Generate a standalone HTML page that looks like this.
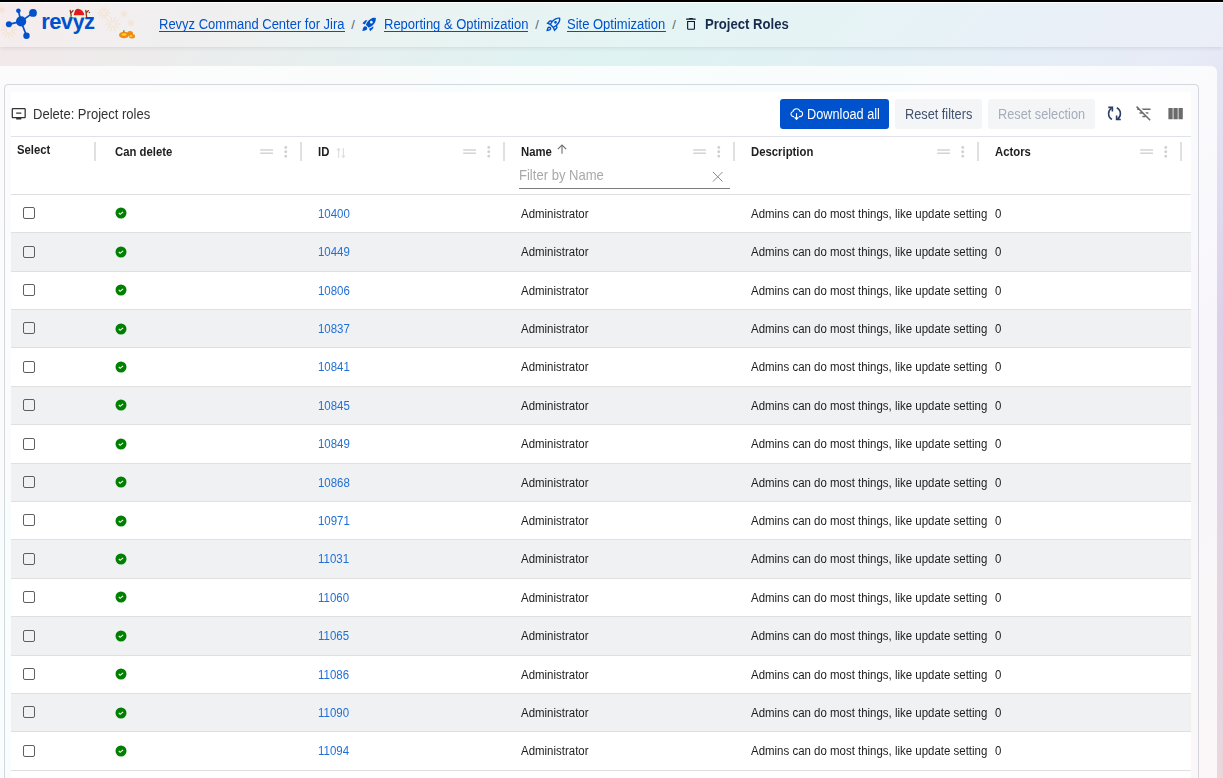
<!DOCTYPE html>
<html><head><meta charset="utf-8">
<style>
*{box-sizing:border-box;margin:0;padding:0}
html,body{width:1223px;height:778px;overflow:hidden}
body{font-family:"Liberation Sans",sans-serif;position:relative;
background:linear-gradient(135deg,#f4e8e9 0%,#e9eeee 16%,#def3f2 33%,#e1f0f4 45%,#e7ebf7 62%,#dcd1e9 77%,#ead7dd 100%);}
.a{position:absolute}
.t{position:absolute;white-space:nowrap}
</style></head><body>

<div class="a" style="left:0;top:0;width:1223px;height:2px;background:#000"></div>
<div class="a" style="left:0;top:2px;width:1223px;height:45px;background:rgba(255,255,255,0.2);border-top:1px solid rgba(255,255,255,0.95);box-shadow:0 1px 4px rgba(0,0,0,0.10)"></div>
<svg class="a" style="left:0;top:0" width="150" height="47" viewBox="0 0 150 47">
 <defs><filter id="bl"><feGaussianBlur stdDeviation="0.45"/></filter></defs><g stroke="#f7c27a" stroke-width="1" fill="none" opacity="0.3" stroke-linecap="round" filter="url(#bl)"><path d="M11.8 30.0L17.0 30.0M11.4 31.4L15.9 34.0M10.4 32.4L13.0 36.9M9.0 32.8L9.0 38.0M7.6 32.4L5.0 36.9M6.6 31.4L2.1 34.0M6.2 30.0L1.0 30.0M6.6 28.6L2.1 26.0M7.6 27.6L5.0 23.1M9.0 27.2L9.0 22.0M10.4 27.6L13.0 23.1M11.4 28.6L15.9 26.0M3.0 10.0L5.0 10.0M2.7 10.7L4.1 12.1M2.0 11.1L2.0 13.0M1.3 10.7L-0.1 12.1M1.0 10.0L-1.0 10.0M1.3 9.3L-0.1 7.9M2.0 8.9L2.0 7.0M2.7 9.3L4.1 7.9M106.1 13.0L110.0 13.0M105.7 14.2L108.9 16.5M104.6 15.0L105.9 18.7M103.4 15.0L102.1 18.7M102.3 14.2L99.1 16.5M101.9 13.0L98.0 13.0M102.3 11.8L99.1 9.5M103.4 11.0L102.1 7.3M104.6 11.0L105.9 7.3M105.7 11.8L108.9 9.5M115.5 24.0L120.0 24.0M115.0 25.4L118.7 28.1M113.8 26.3L115.2 30.7M112.2 26.3L110.8 30.7M111.0 25.4L107.3 28.1M110.5 24.0L106.0 24.0M111.0 22.6L107.3 19.9M112.2 21.7L110.8 17.3M113.8 21.7L115.2 17.3M115.0 22.6L118.7 19.9M125.0 14.0L127.0 14.0M124.7 14.7L126.1 16.1M124.0 15.1L124.0 17.0M123.3 14.7L121.9 16.1M123.0 14.0L121.0 14.0M123.3 13.3L121.9 11.9M124.0 12.9L124.0 11.0M124.7 13.3L126.1 11.9M132.1 23.0L134.0 23.0M131.7 23.7L133.1 25.1M131.0 24.1L131.0 26.0M130.3 23.7L128.9 25.1M129.9 23.0L128.0 23.0M130.3 22.3L128.9 20.9M131.0 21.9L131.0 20.0M131.7 22.3L133.1 20.9"/></g>
 <g stroke="#0052cc" stroke-width="1.7" fill="none">
  <line x1="21" y1="21.4" x2="18.4" y2="10.8"/>
  <line x1="21" y1="21.4" x2="33" y2="12.9"/>
  <line x1="21" y1="21.4" x2="8.9" y2="24.3"/>
  <line x1="21" y1="21.4" x2="26.5" y2="35.7"/>
 </g>
 <g fill="#0052cc">
  <circle cx="21.1" cy="21.4" r="5.1"/>
  <circle cx="18.4" cy="10.8" r="2.3"/>
  <circle cx="33" cy="12.9" r="3.9"/>
  <circle cx="8.9" cy="24.3" r="3"/>
  <circle cx="26.5" cy="35.7" r="3.2"/>
 </g>
 <text x="41.3" y="29.4" font-family="Liberation Sans" font-weight="bold" font-size="22" fill="#0052cc" letter-spacing="-0.65">revyz</text>
 <g stroke="#8a3a12" stroke-width="1.3" fill="none" stroke-linecap="round"><path d="M71.2 16 L70.2 10.3 M71 13 L73 10.6 M86.5 16 L85.8 10.3 M86.2 12.8 L88.4 10.6"/></g>
 <path d="M73.6 15.6 Q74.6 10.4 76.2 9.2 L78 8.8 Q83.4 9.4 84.4 15.6 Z" fill="#e41a1a"/>
 <path d="M72.6 15.4 H85 V17.5 H72.6 Z" fill="#fff8d8"/>
 <circle cx="70.5" cy="17.3" r="0.8" fill="#2a8a2a"/><circle cx="89.4" cy="12.5" r="0.8" fill="#2a8a2a"/><circle cx="86.5" cy="16.4" r="0.7" fill="#d02020"/>
 <g fill="#f08a10"><ellipse cx="124" cy="35" rx="5" ry="3.3"/><ellipse cx="130" cy="33.5" rx="3" ry="2.5"/><ellipse cx="132" cy="36.2" rx="3" ry="2.2"/></g>
 <g fill="#ffd030"><ellipse cx="124" cy="34.5" rx="2.5" ry="1.3"/><ellipse cx="131" cy="36" rx="1.5" ry="1"/></g>
 <rect x="123.4" y="30.2" width="1" height="2" fill="#1a7a1a"/>
</svg>
<div class="t" style="left:158.50px;top:17.05px;font-size:14px;line-height:14px;color:#0052cc;transform:scaleX(0.928);transform-origin:0 0;">Revyz Command Center for Jira</div>
<div class="a" style="left:158.5px;top:31px;width:186.3px;height:1px;background:#0052cc"></div>
<div class="t" style="left:351.30px;top:18.20px;font-size:13px;line-height:13px;color:#5e6470;">/</div>
<div class="t" style="left:383.60px;top:17.05px;font-size:14px;line-height:14px;color:#0052cc;transform:scaleX(0.928);transform-origin:0 0;">Reporting &amp; Optimization</div>
<div class="a" style="left:383.6px;top:31px;width:144.8px;height:1px;background:#0052cc"></div>
<div class="t" style="left:535.30px;top:18.20px;font-size:13px;line-height:13px;color:#5e6470;">/</div>
<div class="t" style="left:567.20px;top:17.05px;font-size:14px;line-height:14px;color:#0052cc;transform:scaleX(0.928);transform-origin:0 0;">Site Optimization</div>
<div class="a" style="left:567.2px;top:31px;width:98.5px;height:1px;background:#0052cc"></div>
<div class="t" style="left:672.30px;top:18.20px;font-size:13px;line-height:13px;color:#5e6470;">/</div>
<div class="t" style="left:705.00px;top:17.05px;font-size:14px;line-height:14px;color:#172b4d;font-weight:bold;transform:scaleX(0.936);transform-origin:0 0;">Project Roles</div>
<svg class="a" style="left:360.6px;top:15.5px" width="16.56" height="16.56" viewBox="0 0 24 24" fill="#0052cc"><path d="M9.19 6.35c-2.04 2.29-3.44 5.58-3.57 5.89L2 10.69l4.05-4.05c.47-.47 1.15-.68 1.81-.55zM11.17 17s3.74-1.55 5.89-3.7c5.4-5.4 4.5-9.62 4.21-10.57-.95-.3-5.17-1.19-10.57 4.21C8.55 9.09 7 12.83 7 12.83zm6.48-2.19c-2.29 2.04-5.58 3.44-5.89 3.57L13.31 22l4.05-4.05c.47-.47.68-1.15.55-1.81zM9 18c0 .83-.34 1.58-.88 2.12C6.94 21.3 2 22 2 22s.7-4.94 1.88-6.12C4.42 15.34 5.17 15 6 15c1.66 0 3 1.34 3 3m4-9c0-1.1.9-2 2-2s2 .9 2 2-.9 2-2 2-2-.9-2-2"/></svg>
<svg class="a" style="left:544.6px;top:15.8px" width="16.8" height="16.8" viewBox="0 0 24 24" fill="#0052cc"><path d="M6 15c-.83 0-1.58.34-2.12.88C2.7 17.06 2 22 2 22s4.94-.7 6.12-1.88c.54-.54.88-1.29.88-2.12 0-1.66-1.34-3-3-3m.71 3.71c-.28.28-2.17.76-2.17.76s.47-1.88.76-2.17c.17-.19.42-.3.7-.3.55 0 1 .45 1 1 0 .28-.11.53-.29.71m10.71-5.06c6.36-6.36 4.24-11.31 4.24-11.31S16.71.22 10.35 6.58l-2.49-.5c-.65-.13-1.33.08-1.81.55L2 10.69l5 2.14L11.17 17l2.14 5 4.05-4.05c.47-.47.68-1.15.55-1.81zM7.41 10.83l-1.91-.82 1.97-1.97 1.44.29c-.57.83-1.08 1.7-1.5 2.5m6.58 7.67-.82-1.91c.8-.42 1.67-.93 2.49-1.5l.29 1.44zM16 12.24c-1.32 1.32-3.38 2.4-4.04 2.73l-2.93-2.93c.32-.65 1.4-2.71 2.73-4.04 4.68-4.68 8.23-3.99 8.23-3.99s.69 3.55-3.99 8.23M15 11c1.1 0 2-.9 2-2s-.9-2-2-2-2 .9-2 2 .9 2 2 2"/></svg>
<svg class="a" style="left:680px;top:14px" width="22" height="20" viewBox="0 0 22 20"><rect x="6" y="4.6" width="9.8" height="1.2" rx="0.6" fill="#0b1530"/><rect x="9.1" y="3.9" width="3.8" height="1.2" rx="0.4" fill="#0b1530"/><path d="M7.65 7.45 H14.45 V14.6 Q14.45 15.25 13.8 15.25 H8.3 Q7.65 15.25 7.65 14.6 Z" fill="none" stroke="#0b1530" stroke-width="1.1"/></svg>
<div class="a" style="left:0;top:66px;width:1217px;height:720px;background:rgba(255,255,255,0.8);border-top-right-radius:6px"></div>
<div class="a" style="left:4px;top:84px;width:1195px;height:720px;border:1px solid rgba(25,40,70,0.17);border-radius:4px"></div>
<div class="a" style="left:11px;top:92px;width:1180px;height:700px;background:#fff"></div>
<div class="a" style="left:11px;top:136px;width:1180px;height:1px;background:#e2e2ea"></div>
<svg class="a" style="left:11.2px;top:106.1px" width="15.48" height="15.48" viewBox="0 0 24 24" fill="#333"><path d="M21 3H3c-1.11 0-2 .89-2 2v12c0 1.1.89 2 2 2h5v2h8v-2h5c1.1 0 1.99-.9 1.99-2L23 5c0-1.11-.9-2-2-2m0 14H3V5h18zM16 10v2H8v-2z"/></svg>
<div class="t" style="left:33.20px;top:107.15px;font-size:14px;line-height:14px;color:#333333;transform:scaleX(0.93);transform-origin:0 0;">Delete: Project roles</div>
<div class="a" style="left:780px;top:99px;width:109px;height:30px;background:#0052cc;border-radius:3px"></div>
<svg class="a" style="left:789px;top:107px" width="15" height="14" viewBox="0 0 15 14" fill="none" stroke="#fff" stroke-width="1.1"><path d="M5 9.6 H4.2 A2.6 2.6 0 0 1 3.9 4.5 A3.7 3.7 0 0 1 11 4.2 A2.7 2.7 0 0 1 10.8 9.6 H10"/><path d="M7.5 6.2 V12"/><path d="M5.6 10.3 L7.5 12.3 L9.4 10.3" stroke-width="1.3"/></svg>
<div class="t" style="left:806.50px;top:106.95px;font-size:14px;line-height:14px;color:#ffffff;transform:scaleX(0.91);transform-origin:0 0;">Download all</div>
<div class="a" style="left:895px;top:99px;width:87px;height:30px;background:#f4f5f7;border-radius:3px"></div>
<div class="t" style="left:905.00px;top:106.95px;font-size:14px;line-height:14px;color:#42526e;transform:scaleX(0.91);transform-origin:0 0;">Reset filters</div>
<div class="a" style="left:988px;top:99px;width:107px;height:30px;background:#f4f5f7;border-radius:3px"></div>
<div class="t" style="left:998.00px;top:106.95px;font-size:14px;line-height:14px;color:#a5adba;transform:scaleX(0.91);transform-origin:0 0;">Reset selection</div>
<svg class="a" style="left:1104px;top:102px" width="22" height="24" viewBox="0 0 22 24" fill="none" stroke="#2b3f66" stroke-width="1.6"><path d="M8 17.4 Q4.6 15.5 4.6 11.7 Q4.6 8.3 7.6 6.2"/><path d="M4.3 5.4 H8.4 V9.6"/><path d="M12.8 5.8 Q16.4 7.8 16.4 11.7 Q16.4 15.2 13.4 17.2"/><path d="M12.6 13.4 V17.5 H16.8"/></svg>
<svg class="a" style="left:1134.8px;top:103.9px" width="17.8" height="17.8" viewBox="0 0 24 24" fill="#6b6b6b"><path d="M10.83 8H21V6H8.83zm5 5H18v-2h-4.17zM14 16.83V18h-4v-2h3.17l-3-3H6v-2h2.17l-3-3H3V6h.17L1.39 4.22 2.8 2.81l18.38 18.38-1.41 1.41z"/></svg>
<svg class="a" style="left:1165.9px;top:104.1px" width="19.2" height="19.2" viewBox="0 0 24 24" fill="#6b6b6b"><path d="M14.67 5v14H9.33V5zm1 14H21V5h-5.33zm-7.34 0V5H3v14z"/></svg>
<div class="t" style="left:17.00px;top:143.67px;font-size:12.2px;line-height:12.2px;color:#1f1f1f;font-weight:bold;transform:scaleX(0.93);transform-origin:0 0;">Select</div>
<div class="t" style="left:115.00px;top:145.67px;font-size:12.2px;line-height:12.2px;color:#1f1f1f;font-weight:bold;transform:scaleX(0.93);transform-origin:0 0;">Can delete</div>
<div class="t" style="left:318.00px;top:145.67px;font-size:12.2px;line-height:12.2px;color:#1f1f1f;font-weight:bold;transform:scaleX(0.93);transform-origin:0 0;">ID</div>
<div class="t" style="left:521.00px;top:145.67px;font-size:12.2px;line-height:12.2px;color:#1f1f1f;font-weight:bold;transform:scaleX(0.93);transform-origin:0 0;">Name</div>
<div class="t" style="left:751.00px;top:145.67px;font-size:12.2px;line-height:12.2px;color:#1f1f1f;font-weight:bold;transform:scaleX(0.93);transform-origin:0 0;">Description</div>
<div class="t" style="left:994.50px;top:145.67px;font-size:12.2px;line-height:12.2px;color:#1f1f1f;font-weight:bold;transform:scaleX(0.93);transform-origin:0 0;">Actors</div>
<div class="a" style="left:94px;top:142px;width:2px;height:19px;background:#e0e0e0"></div>
<div class="a" style="left:300px;top:142px;width:2px;height:19px;background:#e0e0e0"></div>
<svg class="a" style="left:257.30px;top:142px" width="19.2" height="19.2" viewBox="0 0 24 24" fill="#d4d4d4"><path d="M20 9H4v2h16zM4 15h16v-2H4z"/></svg>
<svg class="a" style="left:276.74px;top:142.8px" width="17.52" height="17.52" viewBox="0 0 24 24" fill="#d0d0d0"><path d="M12 8c1.1 0 2-.9 2-2s-.9-2-2-2-2 .9-2 2 .9 2 2 2m0 2c-1.1 0-2 .9-2 2s.9 2 2 2 2-.9 2-2-.9-2-2-2m0 6c-1.1 0-2 .9-2 2s.9 2 2 2 2-.9 2-2-.9-2-2-2"/></svg>
<div class="a" style="left:503px;top:142px;width:2px;height:19px;background:#e0e0e0"></div>
<svg class="a" style="left:460.30px;top:142px" width="19.2" height="19.2" viewBox="0 0 24 24" fill="#d4d4d4"><path d="M20 9H4v2h16zM4 15h16v-2H4z"/></svg>
<svg class="a" style="left:479.74px;top:142.8px" width="17.52" height="17.52" viewBox="0 0 24 24" fill="#d0d0d0"><path d="M12 8c1.1 0 2-.9 2-2s-.9-2-2-2-2 .9-2 2 .9 2 2 2m0 2c-1.1 0-2 .9-2 2s.9 2 2 2 2-.9 2-2-.9-2-2-2m0 6c-1.1 0-2 .9-2 2s.9 2 2 2 2-.9 2-2-.9-2-2-2"/></svg>
<div class="a" style="left:733px;top:142px;width:2px;height:19px;background:#e0e0e0"></div>
<svg class="a" style="left:690.30px;top:142px" width="19.2" height="19.2" viewBox="0 0 24 24" fill="#d4d4d4"><path d="M20 9H4v2h16zM4 15h16v-2H4z"/></svg>
<svg class="a" style="left:709.74px;top:142.8px" width="17.52" height="17.52" viewBox="0 0 24 24" fill="#d0d0d0"><path d="M12 8c1.1 0 2-.9 2-2s-.9-2-2-2-2 .9-2 2 .9 2 2 2m0 2c-1.1 0-2 .9-2 2s.9 2 2 2 2-.9 2-2-.9-2-2-2m0 6c-1.1 0-2 .9-2 2s.9 2 2 2 2-.9 2-2-.9-2-2-2"/></svg>
<div class="a" style="left:977px;top:142px;width:2px;height:19px;background:#e0e0e0"></div>
<svg class="a" style="left:934.30px;top:142px" width="19.2" height="19.2" viewBox="0 0 24 24" fill="#d4d4d4"><path d="M20 9H4v2h16zM4 15h16v-2H4z"/></svg>
<svg class="a" style="left:953.74px;top:142.8px" width="17.52" height="17.52" viewBox="0 0 24 24" fill="#d0d0d0"><path d="M12 8c1.1 0 2-.9 2-2s-.9-2-2-2-2 .9-2 2 .9 2 2 2m0 2c-1.1 0-2 .9-2 2s.9 2 2 2 2-.9 2-2-.9-2-2-2m0 6c-1.1 0-2 .9-2 2s.9 2 2 2 2-.9 2-2-.9-2-2-2"/></svg>
<div class="a" style="left:1180px;top:142px;width:2px;height:19px;background:#e0e0e0"></div>
<svg class="a" style="left:1137.30px;top:142px" width="19.2" height="19.2" viewBox="0 0 24 24" fill="#d4d4d4"><path d="M20 9H4v2h16zM4 15h16v-2H4z"/></svg>
<svg class="a" style="left:1156.74px;top:142.8px" width="17.52" height="17.52" viewBox="0 0 24 24" fill="#d0d0d0"><path d="M12 8c1.1 0 2-.9 2-2s-.9-2-2-2-2 .9-2 2 .9 2 2 2m0 2c-1.1 0-2 .9-2 2s.9 2 2 2 2-.9 2-2-.9-2-2-2m0 6c-1.1 0-2 .9-2 2s.9 2 2 2 2-.9 2-2-.9-2-2-2"/></svg>
<svg class="a" style="left:335px;top:146.5px" width="12" height="12" viewBox="0 0 12 12" fill="none" stroke="#dedede" stroke-width="1.1"><path d="M3.6 11 V1.6 M1.9 3.4 L3.6 1.6 L5.3 3.4"/><path d="M8.4 1 V10.4 M6.7 8.6 L8.4 10.4 L10.1 8.6"/></svg>
<svg class="a" style="left:556.1px;top:144px" width="12" height="11" viewBox="0 0 12 11" fill="none" stroke="#6e6e6e" stroke-width="1.1"><path d="M6 1.2 V9.8"/><path d="M1.8 5.2 L6 1.1 L10.2 5.2"/></svg>
<div class="t" style="left:519.30px;top:168.13px;font-size:14.5px;line-height:14.5px;color:#a9a9a9;transform:scaleX(0.9);transform-origin:0 0;">Filter by Name</div>
<div class="a" style="left:519px;top:188px;width:211px;height:1px;background:#7b7b7b"></div>
<svg class="a" style="left:712px;top:170.5px" width="11.5" height="11.5" viewBox="0 0 11.5 11.5" fill="none" stroke="#8a8a8a" stroke-width="1"><path d="M1 1 L10.5 10.5 M10.5 1 L1 10.5"/></svg>
<div class="a" style="left:11px;top:194px;width:1180px;height:6px;background:linear-gradient(rgba(0,0,0,0.04),rgba(0,0,0,0))"></div>
<div class="a" style="left:11px;top:194px;width:1180px;height:38px;background:#ffffff;border-top:1px solid #e0e0e0"></div>
<div class="a" style="left:23px;top:207.10px;width:12px;height:12px;border:1.3px solid #5f5f5f;border-radius:2px;background:transparent"></div>
<svg class="a" style="left:115.4px;top:207.30px" width="12" height="12" viewBox="0 0 12 12"><circle cx="6" cy="6" r="5.5" fill="#008000"/><path d="M3.8 5.9 L5.1 7.3 L8.1 4.8" fill="none" stroke="#fff" stroke-width="1.05"/></svg>
<div class="t" style="left:317.70px;top:207.84px;font-size:12px;line-height:12px;color:#1f6fd6;transform:scaleX(0.955);transform-origin:0 0;">10400</div>
<div class="t" style="left:520.80px;top:207.84px;font-size:12px;line-height:12px;color:#1c1c1c;transform:scaleX(0.955);transform-origin:0 0;">Administrator</div>
<div class="a" style="left:750px;top:206.00px;width:237px;height:16px;overflow:hidden">
<div class="t" style="left:0.50px;top:1.84px;font-size:12px;line-height:12px;color:#1c1c1c;transform:scaleX(0.955);transform-origin:0 0;">Admins can do most things, like update settings</div>
</div>
<div class="t" style="left:994.50px;top:207.84px;font-size:12px;line-height:12px;color:#1c1c1c;transform:scaleX(0.955);transform-origin:0 0;">0</div>
<div class="a" style="left:11px;top:232px;width:1180px;height:39px;background:#f0f1f3;border-top:1px solid #e0e0e0"></div>
<div class="a" style="left:23px;top:245.50px;width:12px;height:12px;border:1.3px solid #5f5f5f;border-radius:2px;background:transparent"></div>
<svg class="a" style="left:115.4px;top:245.70px" width="12" height="12" viewBox="0 0 12 12"><circle cx="6" cy="6" r="5.5" fill="#008000"/><path d="M3.8 5.9 L5.1 7.3 L8.1 4.8" fill="none" stroke="#fff" stroke-width="1.05"/></svg>
<div class="t" style="left:317.70px;top:246.24px;font-size:12px;line-height:12px;color:#1f6fd6;transform:scaleX(0.955);transform-origin:0 0;">10449</div>
<div class="t" style="left:520.80px;top:246.24px;font-size:12px;line-height:12px;color:#1c1c1c;transform:scaleX(0.955);transform-origin:0 0;">Administrator</div>
<div class="a" style="left:750px;top:244.40px;width:237px;height:16px;overflow:hidden">
<div class="t" style="left:0.50px;top:1.84px;font-size:12px;line-height:12px;color:#1c1c1c;transform:scaleX(0.955);transform-origin:0 0;">Admins can do most things, like update settings</div>
</div>
<div class="t" style="left:994.50px;top:246.24px;font-size:12px;line-height:12px;color:#1c1c1c;transform:scaleX(0.955);transform-origin:0 0;">0</div>
<div class="a" style="left:11px;top:271px;width:1180px;height:38px;background:#ffffff;border-top:1px solid #e0e0e0"></div>
<div class="a" style="left:23px;top:283.90px;width:12px;height:12px;border:1.3px solid #5f5f5f;border-radius:2px;background:transparent"></div>
<svg class="a" style="left:115.4px;top:284.10px" width="12" height="12" viewBox="0 0 12 12"><circle cx="6" cy="6" r="5.5" fill="#008000"/><path d="M3.8 5.9 L5.1 7.3 L8.1 4.8" fill="none" stroke="#fff" stroke-width="1.05"/></svg>
<div class="t" style="left:317.70px;top:284.64px;font-size:12px;line-height:12px;color:#1f6fd6;transform:scaleX(0.955);transform-origin:0 0;">10806</div>
<div class="t" style="left:520.80px;top:284.64px;font-size:12px;line-height:12px;color:#1c1c1c;transform:scaleX(0.955);transform-origin:0 0;">Administrator</div>
<div class="a" style="left:750px;top:282.80px;width:237px;height:16px;overflow:hidden">
<div class="t" style="left:0.50px;top:1.84px;font-size:12px;line-height:12px;color:#1c1c1c;transform:scaleX(0.955);transform-origin:0 0;">Admins can do most things, like update settings</div>
</div>
<div class="t" style="left:994.50px;top:284.64px;font-size:12px;line-height:12px;color:#1c1c1c;transform:scaleX(0.955);transform-origin:0 0;">0</div>
<div class="a" style="left:11px;top:309px;width:1180px;height:38px;background:#f0f1f3;border-top:1px solid #e0e0e0"></div>
<div class="a" style="left:23px;top:322.30px;width:12px;height:12px;border:1.3px solid #5f5f5f;border-radius:2px;background:transparent"></div>
<svg class="a" style="left:115.4px;top:322.50px" width="12" height="12" viewBox="0 0 12 12"><circle cx="6" cy="6" r="5.5" fill="#008000"/><path d="M3.8 5.9 L5.1 7.3 L8.1 4.8" fill="none" stroke="#fff" stroke-width="1.05"/></svg>
<div class="t" style="left:317.70px;top:323.04px;font-size:12px;line-height:12px;color:#1f6fd6;transform:scaleX(0.955);transform-origin:0 0;">10837</div>
<div class="t" style="left:520.80px;top:323.04px;font-size:12px;line-height:12px;color:#1c1c1c;transform:scaleX(0.955);transform-origin:0 0;">Administrator</div>
<div class="a" style="left:750px;top:321.20px;width:237px;height:16px;overflow:hidden">
<div class="t" style="left:0.50px;top:1.84px;font-size:12px;line-height:12px;color:#1c1c1c;transform:scaleX(0.955);transform-origin:0 0;">Admins can do most things, like update settings</div>
</div>
<div class="t" style="left:994.50px;top:323.04px;font-size:12px;line-height:12px;color:#1c1c1c;transform:scaleX(0.955);transform-origin:0 0;">0</div>
<div class="a" style="left:11px;top:347px;width:1180px;height:39px;background:#ffffff;border-top:1px solid #e0e0e0"></div>
<div class="a" style="left:23px;top:360.70px;width:12px;height:12px;border:1.3px solid #5f5f5f;border-radius:2px;background:transparent"></div>
<svg class="a" style="left:115.4px;top:360.90px" width="12" height="12" viewBox="0 0 12 12"><circle cx="6" cy="6" r="5.5" fill="#008000"/><path d="M3.8 5.9 L5.1 7.3 L8.1 4.8" fill="none" stroke="#fff" stroke-width="1.05"/></svg>
<div class="t" style="left:317.70px;top:361.44px;font-size:12px;line-height:12px;color:#1f6fd6;transform:scaleX(0.955);transform-origin:0 0;">10841</div>
<div class="t" style="left:520.80px;top:361.44px;font-size:12px;line-height:12px;color:#1c1c1c;transform:scaleX(0.955);transform-origin:0 0;">Administrator</div>
<div class="a" style="left:750px;top:359.60px;width:237px;height:16px;overflow:hidden">
<div class="t" style="left:0.50px;top:1.84px;font-size:12px;line-height:12px;color:#1c1c1c;transform:scaleX(0.955);transform-origin:0 0;">Admins can do most things, like update settings</div>
</div>
<div class="t" style="left:994.50px;top:361.44px;font-size:12px;line-height:12px;color:#1c1c1c;transform:scaleX(0.955);transform-origin:0 0;">0</div>
<div class="a" style="left:11px;top:386px;width:1180px;height:38px;background:#f0f1f3;border-top:1px solid #e0e0e0"></div>
<div class="a" style="left:23px;top:399.10px;width:12px;height:12px;border:1.3px solid #5f5f5f;border-radius:2px;background:transparent"></div>
<svg class="a" style="left:115.4px;top:399.30px" width="12" height="12" viewBox="0 0 12 12"><circle cx="6" cy="6" r="5.5" fill="#008000"/><path d="M3.8 5.9 L5.1 7.3 L8.1 4.8" fill="none" stroke="#fff" stroke-width="1.05"/></svg>
<div class="t" style="left:317.70px;top:399.84px;font-size:12px;line-height:12px;color:#1f6fd6;transform:scaleX(0.955);transform-origin:0 0;">10845</div>
<div class="t" style="left:520.80px;top:399.84px;font-size:12px;line-height:12px;color:#1c1c1c;transform:scaleX(0.955);transform-origin:0 0;">Administrator</div>
<div class="a" style="left:750px;top:398.00px;width:237px;height:16px;overflow:hidden">
<div class="t" style="left:0.50px;top:1.84px;font-size:12px;line-height:12px;color:#1c1c1c;transform:scaleX(0.955);transform-origin:0 0;">Admins can do most things, like update settings</div>
</div>
<div class="t" style="left:994.50px;top:399.84px;font-size:12px;line-height:12px;color:#1c1c1c;transform:scaleX(0.955);transform-origin:0 0;">0</div>
<div class="a" style="left:11px;top:424px;width:1180px;height:39px;background:#ffffff;border-top:1px solid #e0e0e0"></div>
<div class="a" style="left:23px;top:437.50px;width:12px;height:12px;border:1.3px solid #5f5f5f;border-radius:2px;background:transparent"></div>
<svg class="a" style="left:115.4px;top:437.70px" width="12" height="12" viewBox="0 0 12 12"><circle cx="6" cy="6" r="5.5" fill="#008000"/><path d="M3.8 5.9 L5.1 7.3 L8.1 4.8" fill="none" stroke="#fff" stroke-width="1.05"/></svg>
<div class="t" style="left:317.70px;top:438.24px;font-size:12px;line-height:12px;color:#1f6fd6;transform:scaleX(0.955);transform-origin:0 0;">10849</div>
<div class="t" style="left:520.80px;top:438.24px;font-size:12px;line-height:12px;color:#1c1c1c;transform:scaleX(0.955);transform-origin:0 0;">Administrator</div>
<div class="a" style="left:750px;top:436.40px;width:237px;height:16px;overflow:hidden">
<div class="t" style="left:0.50px;top:1.84px;font-size:12px;line-height:12px;color:#1c1c1c;transform:scaleX(0.955);transform-origin:0 0;">Admins can do most things, like update settings</div>
</div>
<div class="t" style="left:994.50px;top:438.24px;font-size:12px;line-height:12px;color:#1c1c1c;transform:scaleX(0.955);transform-origin:0 0;">0</div>
<div class="a" style="left:11px;top:463px;width:1180px;height:38px;background:#f0f1f3;border-top:1px solid #e0e0e0"></div>
<div class="a" style="left:23px;top:475.90px;width:12px;height:12px;border:1.3px solid #5f5f5f;border-radius:2px;background:transparent"></div>
<svg class="a" style="left:115.4px;top:476.10px" width="12" height="12" viewBox="0 0 12 12"><circle cx="6" cy="6" r="5.5" fill="#008000"/><path d="M3.8 5.9 L5.1 7.3 L8.1 4.8" fill="none" stroke="#fff" stroke-width="1.05"/></svg>
<div class="t" style="left:317.70px;top:476.64px;font-size:12px;line-height:12px;color:#1f6fd6;transform:scaleX(0.955);transform-origin:0 0;">10868</div>
<div class="t" style="left:520.80px;top:476.64px;font-size:12px;line-height:12px;color:#1c1c1c;transform:scaleX(0.955);transform-origin:0 0;">Administrator</div>
<div class="a" style="left:750px;top:474.80px;width:237px;height:16px;overflow:hidden">
<div class="t" style="left:0.50px;top:1.84px;font-size:12px;line-height:12px;color:#1c1c1c;transform:scaleX(0.955);transform-origin:0 0;">Admins can do most things, like update settings</div>
</div>
<div class="t" style="left:994.50px;top:476.64px;font-size:12px;line-height:12px;color:#1c1c1c;transform:scaleX(0.955);transform-origin:0 0;">0</div>
<div class="a" style="left:11px;top:501px;width:1180px;height:38px;background:#ffffff;border-top:1px solid #e0e0e0"></div>
<div class="a" style="left:23px;top:514.30px;width:12px;height:12px;border:1.3px solid #5f5f5f;border-radius:2px;background:transparent"></div>
<svg class="a" style="left:115.4px;top:514.50px" width="12" height="12" viewBox="0 0 12 12"><circle cx="6" cy="6" r="5.5" fill="#008000"/><path d="M3.8 5.9 L5.1 7.3 L8.1 4.8" fill="none" stroke="#fff" stroke-width="1.05"/></svg>
<div class="t" style="left:317.70px;top:515.04px;font-size:12px;line-height:12px;color:#1f6fd6;transform:scaleX(0.955);transform-origin:0 0;">10971</div>
<div class="t" style="left:520.80px;top:515.04px;font-size:12px;line-height:12px;color:#1c1c1c;transform:scaleX(0.955);transform-origin:0 0;">Administrator</div>
<div class="a" style="left:750px;top:513.20px;width:237px;height:16px;overflow:hidden">
<div class="t" style="left:0.50px;top:1.84px;font-size:12px;line-height:12px;color:#1c1c1c;transform:scaleX(0.955);transform-origin:0 0;">Admins can do most things, like update settings</div>
</div>
<div class="t" style="left:994.50px;top:515.04px;font-size:12px;line-height:12px;color:#1c1c1c;transform:scaleX(0.955);transform-origin:0 0;">0</div>
<div class="a" style="left:11px;top:539px;width:1180px;height:39px;background:#f0f1f3;border-top:1px solid #e0e0e0"></div>
<div class="a" style="left:23px;top:552.70px;width:12px;height:12px;border:1.3px solid #5f5f5f;border-radius:2px;background:transparent"></div>
<svg class="a" style="left:115.4px;top:552.90px" width="12" height="12" viewBox="0 0 12 12"><circle cx="6" cy="6" r="5.5" fill="#008000"/><path d="M3.8 5.9 L5.1 7.3 L8.1 4.8" fill="none" stroke="#fff" stroke-width="1.05"/></svg>
<div class="t" style="left:317.70px;top:553.44px;font-size:12px;line-height:12px;color:#1f6fd6;transform:scaleX(0.955);transform-origin:0 0;">11031</div>
<div class="t" style="left:520.80px;top:553.44px;font-size:12px;line-height:12px;color:#1c1c1c;transform:scaleX(0.955);transform-origin:0 0;">Administrator</div>
<div class="a" style="left:750px;top:551.60px;width:237px;height:16px;overflow:hidden">
<div class="t" style="left:0.50px;top:1.84px;font-size:12px;line-height:12px;color:#1c1c1c;transform:scaleX(0.955);transform-origin:0 0;">Admins can do most things, like update settings</div>
</div>
<div class="t" style="left:994.50px;top:553.44px;font-size:12px;line-height:12px;color:#1c1c1c;transform:scaleX(0.955);transform-origin:0 0;">0</div>
<div class="a" style="left:11px;top:578px;width:1180px;height:38px;background:#ffffff;border-top:1px solid #e0e0e0"></div>
<div class="a" style="left:23px;top:591.10px;width:12px;height:12px;border:1.3px solid #5f5f5f;border-radius:2px;background:transparent"></div>
<svg class="a" style="left:115.4px;top:591.30px" width="12" height="12" viewBox="0 0 12 12"><circle cx="6" cy="6" r="5.5" fill="#008000"/><path d="M3.8 5.9 L5.1 7.3 L8.1 4.8" fill="none" stroke="#fff" stroke-width="1.05"/></svg>
<div class="t" style="left:317.70px;top:591.84px;font-size:12px;line-height:12px;color:#1f6fd6;transform:scaleX(0.955);transform-origin:0 0;">11060</div>
<div class="t" style="left:520.80px;top:591.84px;font-size:12px;line-height:12px;color:#1c1c1c;transform:scaleX(0.955);transform-origin:0 0;">Administrator</div>
<div class="a" style="left:750px;top:590.00px;width:237px;height:16px;overflow:hidden">
<div class="t" style="left:0.50px;top:1.84px;font-size:12px;line-height:12px;color:#1c1c1c;transform:scaleX(0.955);transform-origin:0 0;">Admins can do most things, like update settings</div>
</div>
<div class="t" style="left:994.50px;top:591.84px;font-size:12px;line-height:12px;color:#1c1c1c;transform:scaleX(0.955);transform-origin:0 0;">0</div>
<div class="a" style="left:11px;top:616px;width:1180px;height:39px;background:#f0f1f3;border-top:1px solid #e0e0e0"></div>
<div class="a" style="left:23px;top:629.50px;width:12px;height:12px;border:1.3px solid #5f5f5f;border-radius:2px;background:transparent"></div>
<svg class="a" style="left:115.4px;top:629.70px" width="12" height="12" viewBox="0 0 12 12"><circle cx="6" cy="6" r="5.5" fill="#008000"/><path d="M3.8 5.9 L5.1 7.3 L8.1 4.8" fill="none" stroke="#fff" stroke-width="1.05"/></svg>
<div class="t" style="left:317.70px;top:630.24px;font-size:12px;line-height:12px;color:#1f6fd6;transform:scaleX(0.955);transform-origin:0 0;">11065</div>
<div class="t" style="left:520.80px;top:630.24px;font-size:12px;line-height:12px;color:#1c1c1c;transform:scaleX(0.955);transform-origin:0 0;">Administrator</div>
<div class="a" style="left:750px;top:628.40px;width:237px;height:16px;overflow:hidden">
<div class="t" style="left:0.50px;top:1.84px;font-size:12px;line-height:12px;color:#1c1c1c;transform:scaleX(0.955);transform-origin:0 0;">Admins can do most things, like update settings</div>
</div>
<div class="t" style="left:994.50px;top:630.24px;font-size:12px;line-height:12px;color:#1c1c1c;transform:scaleX(0.955);transform-origin:0 0;">0</div>
<div class="a" style="left:11px;top:655px;width:1180px;height:38px;background:#ffffff;border-top:1px solid #e0e0e0"></div>
<div class="a" style="left:23px;top:667.90px;width:12px;height:12px;border:1.3px solid #5f5f5f;border-radius:2px;background:transparent"></div>
<svg class="a" style="left:115.4px;top:668.10px" width="12" height="12" viewBox="0 0 12 12"><circle cx="6" cy="6" r="5.5" fill="#008000"/><path d="M3.8 5.9 L5.1 7.3 L8.1 4.8" fill="none" stroke="#fff" stroke-width="1.05"/></svg>
<div class="t" style="left:317.70px;top:668.64px;font-size:12px;line-height:12px;color:#1f6fd6;transform:scaleX(0.955);transform-origin:0 0;">11086</div>
<div class="t" style="left:520.80px;top:668.64px;font-size:12px;line-height:12px;color:#1c1c1c;transform:scaleX(0.955);transform-origin:0 0;">Administrator</div>
<div class="a" style="left:750px;top:666.80px;width:237px;height:16px;overflow:hidden">
<div class="t" style="left:0.50px;top:1.84px;font-size:12px;line-height:12px;color:#1c1c1c;transform:scaleX(0.955);transform-origin:0 0;">Admins can do most things, like update settings</div>
</div>
<div class="t" style="left:994.50px;top:668.64px;font-size:12px;line-height:12px;color:#1c1c1c;transform:scaleX(0.955);transform-origin:0 0;">0</div>
<div class="a" style="left:11px;top:693px;width:1180px;height:38px;background:#f0f1f3;border-top:1px solid #e0e0e0"></div>
<div class="a" style="left:23px;top:706.30px;width:12px;height:12px;border:1.3px solid #5f5f5f;border-radius:2px;background:transparent"></div>
<svg class="a" style="left:115.4px;top:706.50px" width="12" height="12" viewBox="0 0 12 12"><circle cx="6" cy="6" r="5.5" fill="#008000"/><path d="M3.8 5.9 L5.1 7.3 L8.1 4.8" fill="none" stroke="#fff" stroke-width="1.05"/></svg>
<div class="t" style="left:317.70px;top:707.04px;font-size:12px;line-height:12px;color:#1f6fd6;transform:scaleX(0.955);transform-origin:0 0;">11090</div>
<div class="t" style="left:520.80px;top:707.04px;font-size:12px;line-height:12px;color:#1c1c1c;transform:scaleX(0.955);transform-origin:0 0;">Administrator</div>
<div class="a" style="left:750px;top:705.20px;width:237px;height:16px;overflow:hidden">
<div class="t" style="left:0.50px;top:1.84px;font-size:12px;line-height:12px;color:#1c1c1c;transform:scaleX(0.955);transform-origin:0 0;">Admins can do most things, like update settings</div>
</div>
<div class="t" style="left:994.50px;top:707.04px;font-size:12px;line-height:12px;color:#1c1c1c;transform:scaleX(0.955);transform-origin:0 0;">0</div>
<div class="a" style="left:11px;top:731px;width:1180px;height:39px;background:#ffffff;border-top:1px solid #e0e0e0"></div>
<div class="a" style="left:23px;top:744.70px;width:12px;height:12px;border:1.3px solid #5f5f5f;border-radius:2px;background:transparent"></div>
<svg class="a" style="left:115.4px;top:744.90px" width="12" height="12" viewBox="0 0 12 12"><circle cx="6" cy="6" r="5.5" fill="#008000"/><path d="M3.8 5.9 L5.1 7.3 L8.1 4.8" fill="none" stroke="#fff" stroke-width="1.05"/></svg>
<div class="t" style="left:317.70px;top:745.44px;font-size:12px;line-height:12px;color:#1f6fd6;transform:scaleX(0.955);transform-origin:0 0;">11094</div>
<div class="t" style="left:520.80px;top:745.44px;font-size:12px;line-height:12px;color:#1c1c1c;transform:scaleX(0.955);transform-origin:0 0;">Administrator</div>
<div class="a" style="left:750px;top:743.60px;width:237px;height:16px;overflow:hidden">
<div class="t" style="left:0.50px;top:1.84px;font-size:12px;line-height:12px;color:#1c1c1c;transform:scaleX(0.955);transform-origin:0 0;">Admins can do most things, like update settings</div>
</div>
<div class="t" style="left:994.50px;top:745.44px;font-size:12px;line-height:12px;color:#1c1c1c;transform:scaleX(0.955);transform-origin:0 0;">0</div>
<div class="a" style="left:11px;top:770px;width:1180px;height:38px;background:#ffffff;border-top:1px solid #e0e0e0"></div>
</body></html>
